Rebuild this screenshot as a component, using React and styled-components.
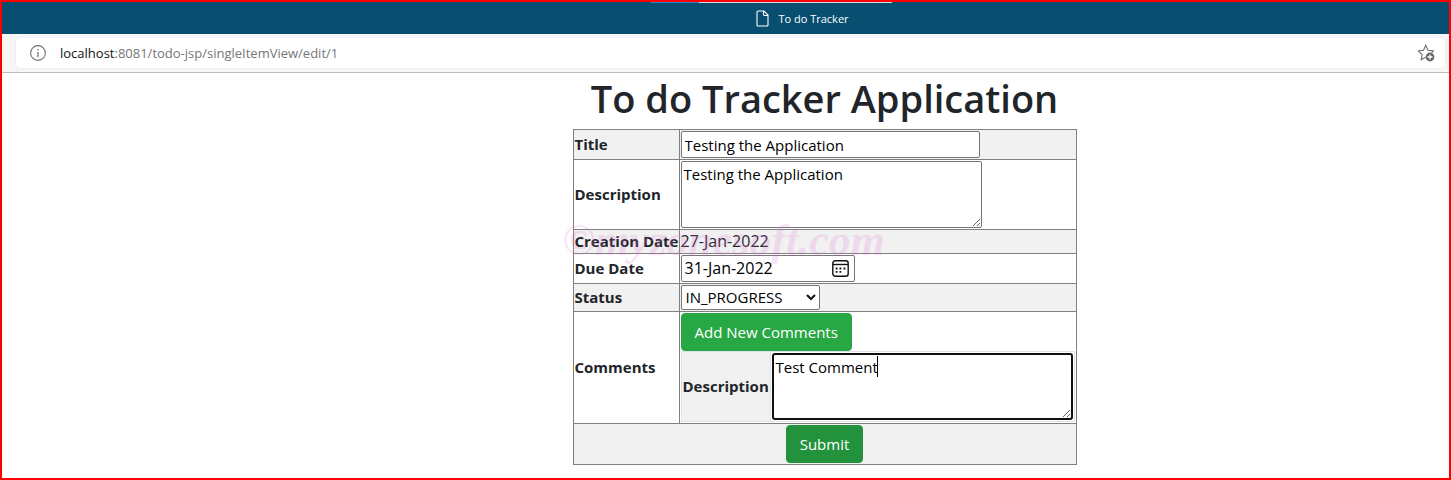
import React from "react";
import styled, { createGlobalStyle } from "styled-components";

const GlobalStyle = createGlobalStyle`
  *, *::before, *::after { box-sizing: border-box; }
  body {
    margin: 0;
    background: #fff;
    color: #212529;
    font: 15px/21px "Open Sans", "Noto Sans", sans-serif;
  }
  input, textarea, select, button { font: inherit; margin: 0; }
`;

const Window = styled.div`
  min-height: 100vh;
  border: 2px solid #f00;
`;

const TabBar = styled.header`
  position: relative;
  display: flex;
  justify-content: center;
  align-items: center;
  gap: 9px;
  height: 32px;
  padding-left: 154px;
  background: #074e70;
  color: #fff;
  font-size: 11px;
`;

const TabEdge = styled.span`
  position: absolute;
  top: 0;
  left: calc(50% - 75px);
  width: 241px;
  height: 1px;
  background: linear-gradient(to right, #2a87c8 48px, #d5dde2 48px);
`;

const AddressBar = styled.div`
  padding: 4px 4px 4px 14px;
  border-bottom: 1px solid #bdbdbd;
  background: #f6f6f6;
`;

const AddressField = styled.div`
  display: flex;
  align-items: center;
  height: 30px;
  padding: 0 10px 0 14px;
  border-radius: 4px;
  background: #fff;
  box-shadow: 0 0 2px #ddd;
`;

const Address = styled.p`
  flex: 1;
  margin: 0 0 0 14px;
  color: #767676;
  font-size: 13px;
`;

const Host = styled.span`
  color: #111;
`;

const IconButton = styled.button`
  display: flex;
  padding: 0;
  border: 0;
  background: none;
`;

const Main = styled.main`
  display: flex;
  flex-direction: column;
  align-items: center;
  margin-left: 198px;
`;

const Heading = styled.h1`
  margin: 0 0 6px;
  font-size: 38px;
  font-weight: 600;
  line-height: 50px;
`;

const FormArea = styled.form`
  position: relative;
`;

const FormTable = styled.table`
  width: 504px;
  table-layout: fixed;
  border-collapse: collapse;
`;

const Row = styled.tr`
  height: ${(p) => p.$height}px;
  background: ${(p) => (p.$shaded ? "#f1f1f1" : "#fff")};
`;

const LabelCell = styled.th`
  width: 106px;
  padding: 1px;
  border: 1px solid #808080;
  font-weight: 700;
  text-align: left;
  white-space: nowrap;
`;

const Cell = styled.td`
  padding: 1px;
  border: 1px solid #808080;
  text-align: ${(p) => (p.$center ? "center" : "left")};
`;

const DateText = styled.span`
  font-size: 16px;
`;

const TextInput = styled.input`
  display: block;
  width: 299px;
  height: 27px;
  padding: 1px 3px;
  border: 1px solid #767676;
  border-radius: 2px;
  background: #fff;
  color: #000;
`;

const TextArea = styled.textarea`
  display: block;
  width: 301px;
  height: 67px;
  padding: 2px;
  border: 1px solid #767676;
  border-radius: 2px;
  background: #fff;
  color: #000;
  resize: both;
  ${(p) => p.$active && "border: 2px solid #101010; border-radius: 3px; outline: none;"}
`;

const DateBox = styled.div`
  display: flex;
  align-items: center;
  width: 174px;
  height: 27px;
  padding-right: 5px;
  border: 1px solid #767676;
  border-radius: 2px;
  background: #fff;
`;

const DateInput = styled.input`
  flex: 1;
  min-width: 0;
  padding: 0 3px;
  border: 0;
  background: none;
  color: #000;
  font-size: 16px;
`;

const SelectBox = styled.div`
  position: relative;
  width: 139px;
`;

const Select = styled.select`
  display: block;
  width: 100%;
  height: 25px;
  padding: 0 4px;
  border: 1px solid #767676;
  border-radius: 2px;
  background: #fff;
  color: #000;
  appearance: none;
`;

const Chevron = styled.svg`
  position: absolute;
  top: 8px;
  right: 4px;
  pointer-events: none;
`;

const Button = styled.button`
  display: inline-block;
  height: 38px;
  padding: 6px 13px;
  border: 1px solid ${(p) => (p.$pressed ? "#23923d" : "#28a745")};
  border-radius: 4px;
  background: ${(p) => (p.$pressed ? "#23923d" : "#28a745")};
  color: #fff;
  vertical-align: top;
  white-space: nowrap;
`;

const CommentRow = styled.div`
  display: flex;
  width: 394px;
  height: 71px;
  border: 1px solid #dee2e6;
`;

const CommentLabel = styled.label`
  display: flex;
  align-items: center;
  width: 89px;
  padding-left: 1px;
  background: #f1f1f1;
  border-right: 1px solid #dee2e6;
  font-weight: 700;
`;

const CommentField = styled.div`
  position: relative;
  padding: 1px;
`;

const Caret = styled.span`
  position: absolute;
  top: 4px;
  left: 106px;
  width: 1px;
  height: 21px;
  background: #000;
`;

const Watermark = styled.div`
  position: absolute;
  top: 84px;
  left: -10px;
  color: rgba(226, 110, 214, 0.2);
  font: italic 700 44px/56px "Liberation Serif", serif;
  white-space: nowrap;
  pointer-events: none;
`;

const PageIcon = () => (
  <svg width="13" height="17" viewBox="0 0 13 17" fill="none" stroke="#fff" strokeWidth="1.1">
    <path d="M2 1h6l4 4v10q0 1-1 1H2q-1 0-1-1V2q0-1 1-1zM7.5 1v3.5q0 1 1 1H12" />
  </svg>
);

const InfoIcon = () => (
  <svg width="16" height="16" viewBox="0 0 16 16" fill="none" stroke="#707070" strokeWidth="1.1">
    <circle cx="8" cy="8" r="7.4" />
    <path d="M8 7v5M8 4v1.4" strokeWidth="1.3" />
  </svg>
);

const FavouriteIcon = () => (
  <svg width="18" height="18" viewBox="0 0 18 18" fill="none">
    <path d="M8.500 13.200L4.200 15.700l.9-5L1.300 7l5.200-.8L8.700 1.300l2.300 4.900 5.300.8-1.500 1.500" stroke="#6b6b6b" strokeWidth="1.1" />
    <circle cx="13" cy="13" r="4.400" fill="#666" />
    <path d="M13 10.500v5M10.500 13h5" stroke="#fff" strokeWidth="1.300" />
  </svg>
);

const CalendarIcon = () => (
  <svg width="17" height="17" viewBox="0 0 17 17" fill="none" stroke="#111" strokeWidth="1.400">
    <rect x=".8" y=".8" width="15.400" height="15.400" rx="2.500" />
    <path d="M1 4.500h15" />
    <path d="M7.500 8.500h1.800M11.500 8.500h1.800M3.700 11.800h1.800M7.500 11.800h1.800M3.700 8.500h1.800" strokeWidth="1.800" />
  </svg>
);

export default function App() {
  return (
    <>
      <GlobalStyle />
      <Window>
        <TabBar>
          <TabEdge />
          <PageIcon />
          <span>To do Tracker</span>
        </TabBar>
        <AddressBar>
          <AddressField>
            <InfoIcon />
            <Address>
              <Host>localhost</Host>:8081/todo-jsp/singleItemView/edit/1
            </Address>
            <IconButton type="button" aria-label="Add to favourites">
              <FavouriteIcon />
            </IconButton>
          </AddressField>
        </AddressBar>
        <Main>
          <Heading>To do Tracker Application</Heading>
          <FormArea onSubmit={(e) => e.preventDefault()}>
            <FormTable>
              <tbody>
                <Row $shaded $height={30}>
                  <LabelCell scope="row"><label htmlFor="title">Title</label></LabelCell>
                  <Cell><TextInput id="title" defaultValue="Testing the Application" /></Cell>
                </Row>
                <Row $height={70}>
                  <LabelCell scope="row"><label htmlFor="description">Description</label></LabelCell>
                  <Cell><TextArea id="description" defaultValue="Testing the Application" /></Cell>
                </Row>
                <Row $shaded $height={24}>
                  <LabelCell scope="row">Creation Date</LabelCell>
                  <Cell><DateText>27-Jan-2022</DateText></Cell>
                </Row>
                <Row $height={30}>
                  <LabelCell scope="row"><label htmlFor="due">Due Date</label></LabelCell>
                  <Cell>
                    <DateBox>
                      <DateInput id="due" defaultValue="31-Jan-2022" />
                      <IconButton type="button" aria-label="Pick a date"><CalendarIcon /></IconButton>
                    </DateBox>
                  </Cell>
                </Row>
                <Row $shaded $height={28}>
                  <LabelCell scope="row"><label htmlFor="status">Status</label></LabelCell>
                  <Cell>
                    <SelectBox>
                      <Select id="status" defaultValue="IN_PROGRESS">
                        <option>IN_PROGRESS</option>
                      </Select>
                      <Chevron width="10" height="8" viewBox="0 0 10 8" fill="none" stroke="#111" strokeWidth="2">
                        <path d="M1 2l4 4 4-4" />
                      </Chevron>
                    </SelectBox>
                  </Cell>
                </Row>
                <Row $height={112}>
                  <LabelCell scope="row">Comments</LabelCell>
                  <Cell>
                    <Button type="button">Add New Comments</Button>
                    <CommentRow>
                      <CommentLabel htmlFor="comment">Description</CommentLabel>
                      <CommentField>
                        <TextArea id="comment" $active defaultValue="Test Comment" />
                        <Caret />
                      </CommentField>
                    </CommentRow>
                  </Cell>
                </Row>
                <Row $shaded $height={41}>
                  <Cell colSpan={2} $center><Button $pressed type="submit">Submit</Button></Cell>
                </Row>
              </tbody>
            </FormTable>
            <Watermark>©myzonesoft.com</Watermark>
          </FormArea>
        </Main>
      </Window>
    </>
  );
}
